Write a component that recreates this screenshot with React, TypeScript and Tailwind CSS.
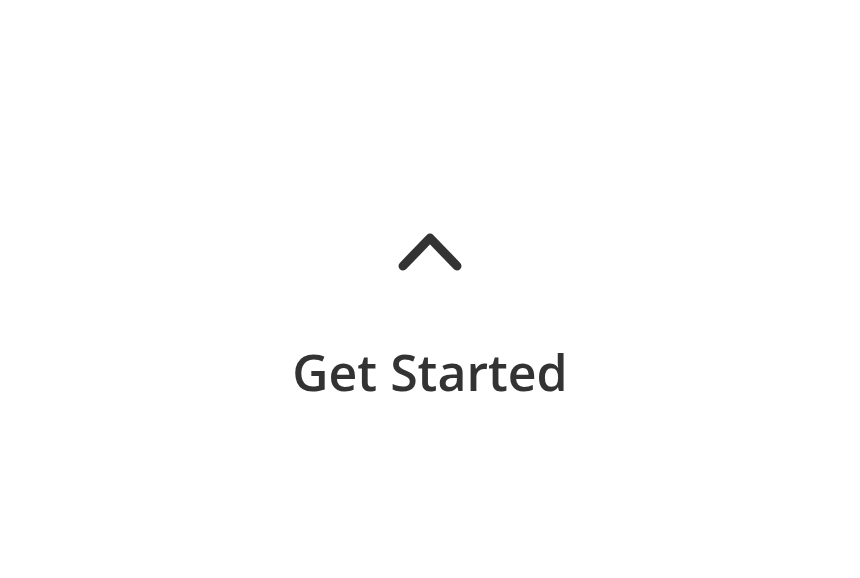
export default function App() {
  return (
    <div className="flex h-[578px] w-full flex-col items-center bg-white pt-[232px] text-[#333333]">
      <svg width="64" height="40" viewBox="0 0 64 40" fill="none" className="shrink-0">
        <path
          d="M5 34 L32 6 L59 34"
          stroke="currentColor"
          strokeWidth="9"
          strokeLinecap="round"
          strokeLinejoin="round"
        />
      </svg>
      <h1 className="mt-[72px] font-['Open_Sans',sans-serif] text-[50px] font-semibold leading-[56px]">
        Get Started
      </h1>
    </div>
  )
}
